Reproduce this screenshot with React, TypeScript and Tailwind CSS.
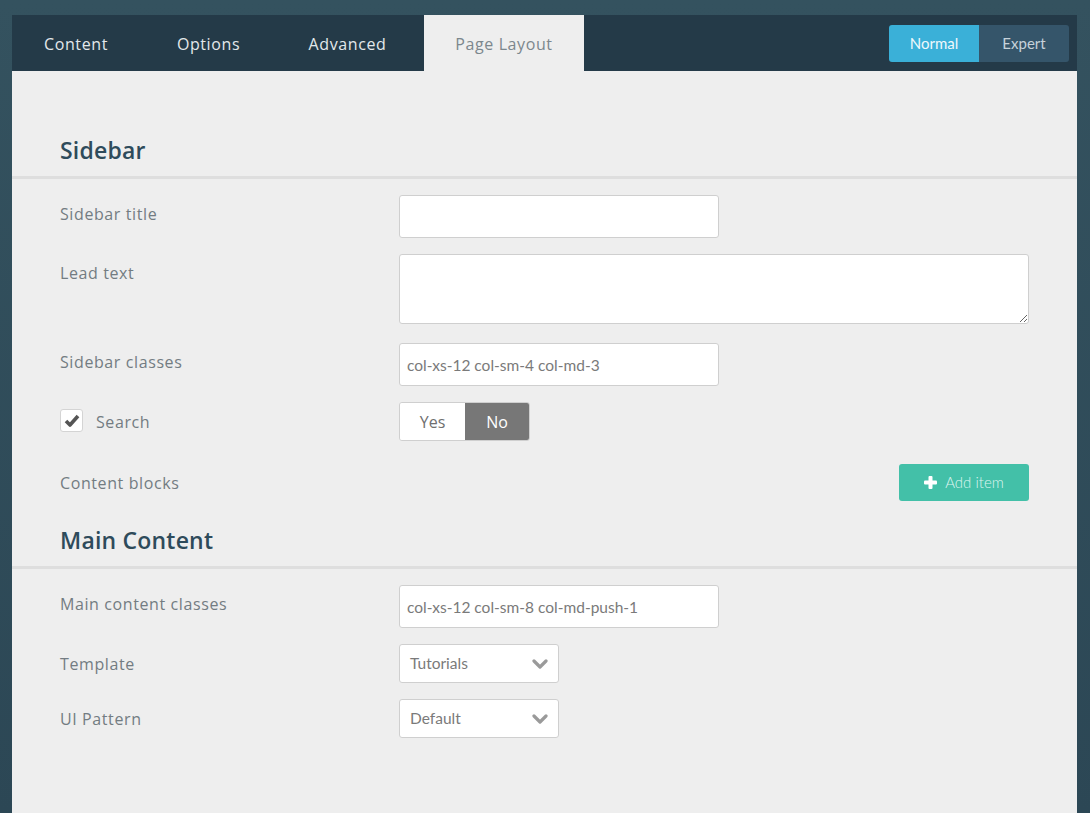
import { useState } from 'react'

const tabs = [
    { label: 'Content', width: 'w-[128px]' },
    { label: 'Options', width: 'w-[137px]' },
    { label: 'Advanced', width: 'w-[141px]' },
]

const labelFont = { fontFamily: '"Open Sans", "DejaVu Sans", sans-serif' }
const inputFont = { fontFamily: 'Lato, "Liberation Sans", sans-serif' }

function Chevron() {
    return (
        <svg width="16" height="12" viewBox="0 0 16 12" className="text-[#9a9a9a]">
            <polyline points="2,3 8,9 14,3" fill="none" stroke="currentColor" strokeWidth="3.2" strokeLinecap="round" strokeLinejoin="round" />
        </svg>
    )
}

function Label({ children, top = false }: { children: React.ReactNode; top?: boolean }) {
    return (
        <div className={`w-[339px] shrink-0 text-[16px] tracking-[0.6px] text-[#737c82] leading-6 ${top ? 'pt-[7px]' : ''}`} style={labelFont}>
            {children}
        </div>
    )
}

function TextInput({ value = '', wide = false }: { value?: string; wide?: boolean }) {
    return (
        <input
            defaultValue={value}
            className={`${wide ? 'w-[630px]' : 'w-[320px]'} h-[43px] rounded-[3px] border border-[#cfcfcf] bg-white px-[7px] text-[15.5px] text-[#7a7a7a] outline-none`}
            style={inputFont}
        />
    )
}

function Select({ value }: { value: string }) {
    return (
        <div className="w-[160px] h-[39px] rounded-[3px] border border-[#cfcfcf] bg-white flex items-center justify-between pl-[10px] pr-[10px] text-[15.5px] text-[#7a7a7a]" style={inputFont}>
            <span>{value}</span>
            <Chevron />
        </div>
    )
}

function SectionTitle({ children }: { children: React.ReactNode }) {
    return (
        <div className="border-b-[3px] border-[#dedede] px-[48px] pb-[10px]">
            <h2 className="text-[23px] leading-8 font-semibold tracking-[0.2px] text-[#2e4b5b]" style={labelFont}>{children}</h2>
        </div>
    )
}

export default function App() {
    const [mode, setMode] = useState<'normal' | 'expert'>('normal')
    const [search, setSearch] = useState(false)
    const [checked, setChecked] = useState(true)

    return (
        <div className="min-h-[813px] bg-gradient-to-b from-[#34525f] to-[#2c4755] pt-[15px] px-[12px] pr-[13px]">
            <div className="min-h-[798px] bg-[#eeeeee] flex flex-col">
                {/* Tab bar */}
                <div className="h-[56px] bg-[#243a48] flex items-stretch">
                    {tabs.map((t) => (
                        <div key={t.label} className={`${t.width} flex items-center justify-center pt-[2px] text-[16px] tracking-[0.6px] text-[#e3e8eb]`} style={labelFont}>
                            {t.label}
                        </div>
                    ))}
                    <div className="ml-[6px] w-[160px] bg-[#eeeeee] flex items-center justify-center pt-[2px] text-[16px] tracking-[0.6px] text-[#7c878d]" style={labelFont}>
                        Page Layout
                    </div>
                    <div className="ml-auto mr-[8px] flex items-center">
                        <div className="flex h-[37px] rounded-[3px] overflow-hidden text-[15px]" style={inputFont}>
                            <button
                                onClick={() => setMode('normal')}
                                className={`w-[90px] ${mode === 'normal' ? 'bg-[#3ab0d8] text-[#eef8fc]' : 'bg-[#35556a] text-[#c6d2da]'}`}
                            >
                                Normal
                            </button>
                            <button
                                onClick={() => setMode('expert')}
                                className={`w-[90px] ${mode === 'expert' ? 'bg-[#3ab0d8] text-[#eef8fc]' : 'bg-[#35556a] text-[#c6d2da]'}`}
                            >
                                Expert
                            </button>
                        </div>
                    </div>
                </div>

                {/* Sidebar section */}
                <div className="pt-[63px]">
                    <SectionTitle>Sidebar</SectionTitle>
                </div>
                <div className="px-[48px] pt-[16px]">
                    <div className="flex mb-[16px]">
                        <Label top>Sidebar title</Label>
                        <TextInput />
                    </div>
                    <div className="flex mb-[19px]">
                        <Label top>Lead text</Label>
                        <textarea
                            className="w-[630px] h-[70px] rounded-[3px] border border-[#cfcfcf] bg-white px-[7px] py-[6px] text-[15.5px] text-[#7a7a7a] outline-none"
                            style={inputFont}
                        />
                    </div>
                    <div className="flex mb-[16px]">
                        <Label top>Sidebar classes</Label>
                        <TextInput value="col-xs-12 col-sm-4 col-md-3" />
                    </div>
                    <div className="flex items-center mb-[23px]">
                        <div className="w-[339px] shrink-0 flex items-center gap-[13px]">
                            <button
                                onClick={() => setChecked(!checked)}
                                className="w-[23px] h-[23px] rounded-[3px] border border-[#d4d4d4] bg-white flex items-center justify-center -mt-[3px]"
                            >
                                {checked && (
                                    <svg width="16" height="13" viewBox="0 0 16 13">
                                        <polyline points="2,7 6,11 14,2" fill="none" stroke="#555" strokeWidth="3.6" strokeLinejoin="round" />
                                    </svg>
                                )}
                            </button>
                            <span className="text-[16px] tracking-[0.6px] text-[#737c82]" style={labelFont}>Search</span>
                        </div>
                        <div className="flex h-[39px] rounded-[3px] border border-[#cfcfcf] overflow-hidden text-[16px]" style={labelFont}>
                            <button
                                onClick={() => setSearch(true)}
                                className={`w-[65px] ${search ? 'bg-[#777777] text-white' : 'bg-white text-[#6f6f6f]'}`}
                            >
                                Yes
                            </button>
                            <button
                                onClick={() => setSearch(false)}
                                className={`w-[64px] ${!search ? 'bg-[#777777] text-white' : 'bg-white text-[#6f6f6f]'}`}
                            >
                                No
                            </button>
                        </div>
                    </div>
                    <div className="flex items-center">
                        <Label>Content blocks</Label>
                        <div className="w-[630px] flex justify-end">
                            <button className="w-[130px] h-[37px] rounded-[3px] bg-[#43c0a8] flex items-center justify-center gap-[8px] text-[15px] font-light text-[#dff5f0]" style={inputFont}>
                                <svg width="13" height="13" viewBox="0 0 13 13">
                                    <rect x="4.5" y="0" width="4" height="13" rx="1" fill="#fff" />
                                    <rect x="0" y="4.5" width="13" height="4" rx="1" fill="#fff" />
                                </svg>
                                Add item
                            </button>
                        </div>
                    </div>
                </div>

                {/* Main content section */}
                <div className="pt-[23px]">
                    <SectionTitle>Main Content</SectionTitle>
                </div>
                <div className="px-[48px] pt-[16px] pb-[60px]">
                    <div className="flex mb-[16px]">
                        <Label top>Main content classes</Label>
                        <TextInput value="col-xs-12 col-sm-8 col-md-push-1" />
                    </div>
                    <div className="flex items-center mb-[16px]">
                        <Label>Template</Label>
                        <Select value="Tutorials" />
                    </div>
                    <div className="flex items-center">
                        <Label>UI Pattern</Label>
                        <Select value="Default" />
                    </div>
                </div>
            </div>
        </div>
    )
}
